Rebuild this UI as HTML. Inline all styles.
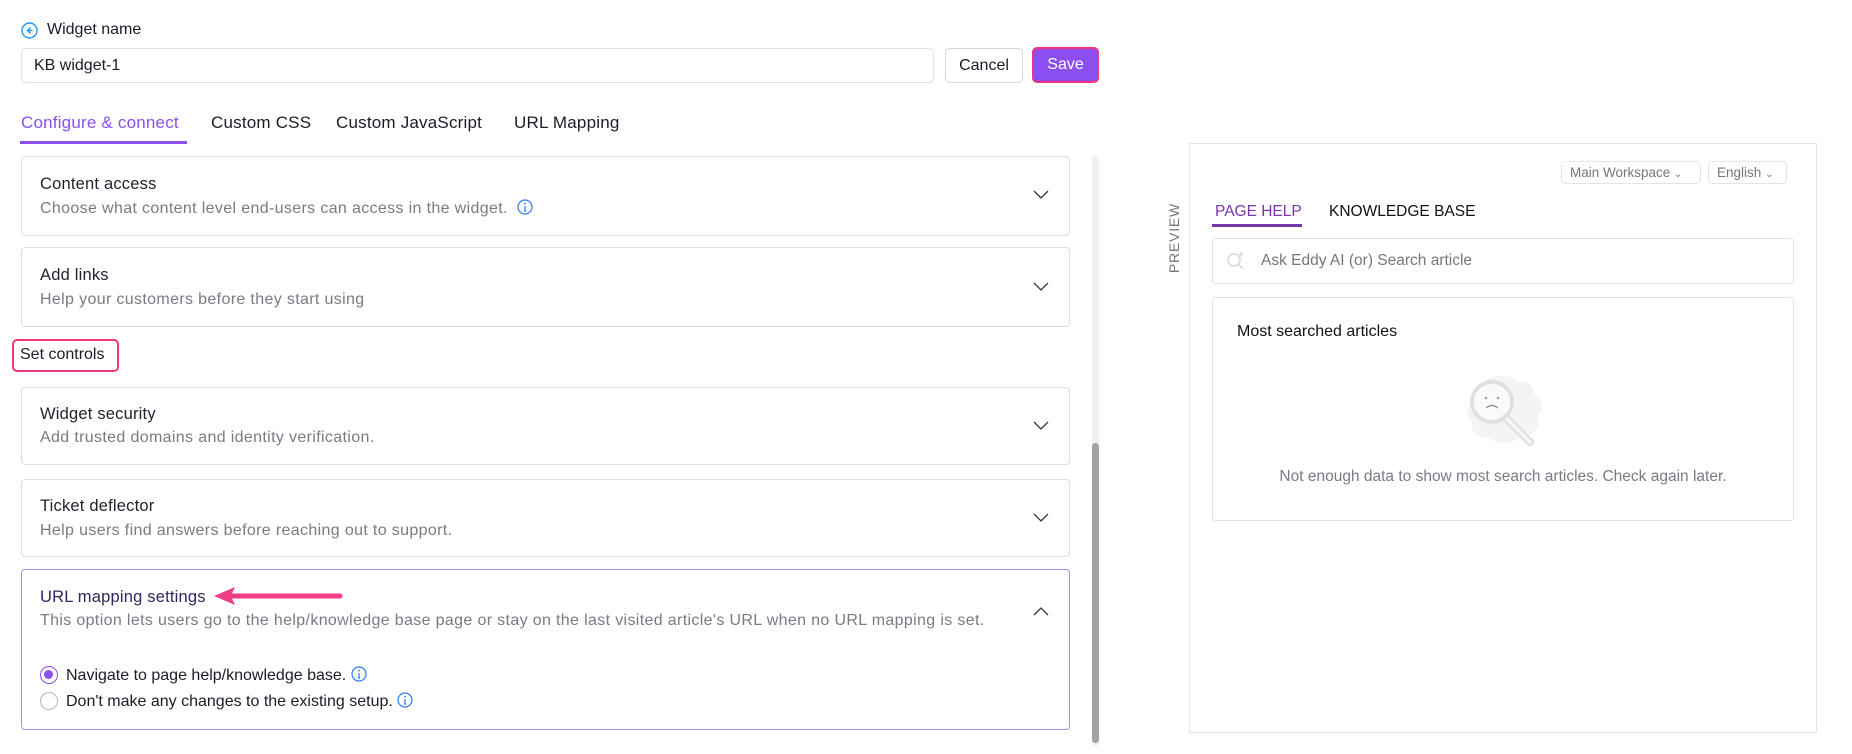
<!DOCTYPE html>
<html><head><meta charset="utf-8"><style>
*{box-sizing:border-box;margin:0;padding:0}
body{width:1852px;height:754px;background:#fff;font-family:"Liberation Sans",sans-serif;color:#1f1f2e;position:relative;overflow:hidden}
.a{position:absolute;white-space:nowrap}
.card{position:absolute;left:21px;width:1049px;border:1px solid #dcdce3;border-radius:4px;background:#fff}
.t{font-size:16.5px;color:#23232f;letter-spacing:.2px}
.d{font-size:16px;color:#7a7a85;letter-spacing:.35px}
.chev{position:absolute;right:20px;width:16px;height:10px}
.tab{font-size:17px;letter-spacing:.2px;color:#1c1c28}
</style></head><body>

<svg class="a" style="left:21px;top:22px" width="17" height="17" viewBox="0 0 17 17"><circle cx="8.5" cy="8.5" r="7.5" fill="none" stroke="#2196f3" stroke-width="1.4"/><path d="M9.5 5.5 L6.5 8.5 L9.5 11.5 M6.5 8.5 H11.5" fill="none" stroke="#2196f3" stroke-width="1.4"/></svg>
<div class="a" style="left:47px;top:21px;font-size:16px;color:#1c1c28">Widget name</div>

<div class="a" style="left:21px;top:48px;width:913px;height:35px;border:1px solid #e1e1e6;border-radius:5px;padding:8px 12px;font-size:16px;color:#1c1c28">KB widget-1</div>
<div class="a" style="left:945px;top:48px;width:78px;height:35px;border:1px solid #d4d4da;border-radius:5px;font-size:16px;text-align:center;line-height:33px;color:#1c1c28">Cancel</div>
<div class="a" style="left:1032px;top:47px;width:67px;height:36px;border:2.5px solid #f0357e;border-radius:5px;background:#8b4ff0;color:#fff;font-size:16px;text-align:center;line-height:31px">Save</div>

<div class="a tab" style="left:21px;top:113px;color:#8b4ff0">Configure &amp; connect</div>
<div class="a" style="left:20px;top:141px;width:167px;height:3px;background:#8b4ff0"></div>
<div class="a tab" style="left:211px;top:113px">Custom CSS</div>
<div class="a tab" style="left:336px;top:113px">Custom JavaScript</div>
<div class="a tab" style="left:514px;top:113px">URL Mapping</div>

<div class="card" style="top:156px;height:80px">
<div class="a t" style="left:18px;top:18px">Content access</div>
<div class="a d" style="left:18px;top:42px">Choose what content level end-users can access in the widget. <svg width="16" height="16" viewBox="0 0 16 16" style="vertical-align:-2px;margin-left:4px"><circle cx="8" cy="8" r="7" fill="none" stroke="#2f7bf0" stroke-width="1.2"/><path d="M8 7v5M7 12h2" stroke="#2f7bf0" stroke-width="1.2"/><circle cx="8" cy="4.6" r=".9" fill="#2f7bf0"/></svg></div>
<svg class="chev" style="top:33px" viewBox="0 0 16 10"><path d="M1 1l7 7 7-7" fill="none" stroke="#333" stroke-width="1.3"/></svg>
</div>

<div class="card" style="top:247px;height:80px">
<div class="a t" style="left:18px;top:18px">Add links</div>
<div class="a d" style="left:18px;top:43px">Help your customers before they start using</div>
<svg class="chev" style="top:34px" viewBox="0 0 16 10"><path d="M1 1l7 7 7-7" fill="none" stroke="#333" stroke-width="1.3"/></svg>
</div>

<div class="a" style="left:12px;top:339px;width:107px;height:33px;border:2.5px solid #ef3580;border-radius:5px;font-size:16px;padding-left:6px;line-height:28px;color:#1c1c28">Set controls</div>

<div class="card" style="top:387px;height:78px">
<div class="a t" style="left:18px;top:17px">Widget security</div>
<div class="a d" style="left:18px;top:41px">Add trusted domains and identity verification.</div>
<svg class="chev" style="top:33px" viewBox="0 0 16 10"><path d="M1 1l7 7 7-7" fill="none" stroke="#333" stroke-width="1.3"/></svg>
</div>

<div class="card" style="top:479px;height:78px">
<div class="a t" style="left:18px;top:17px">Ticket deflector</div>
<div class="a d" style="left:18px;top:42px">Help users find answers before reaching out to support.</div>
<svg class="chev" style="top:33px" viewBox="0 0 16 10"><path d="M1 1l7 7 7-7" fill="none" stroke="#333" stroke-width="1.3"/></svg>
</div>

<div class="card" style="top:569px;height:161px;border-color:#a88ff0">
<div class="a t" style="left:18px;top:18px;color:#2e2660">URL mapping settings</div>
<div class="a d" style="left:18px;top:42px">This option lets users go to the help/knowledge base page or stay on the last visited article's URL when no URL mapping is set.</div>
<svg class="chev" style="top:36px" viewBox="0 0 16 10"><path d="M1 9l7-7 7 7" fill="none" stroke="#333" stroke-width="1.3"/></svg>
<div class="a" style="left:18px;top:96px;width:18px;height:18px;border:1.5px solid #8b4ff0;border-radius:50%"><div style="margin:3px;width:9px;height:9px;border-radius:50%;background:#8b4ff0"></div></div>
<div class="a" style="left:44px;top:96px;font-size:16px;color:#1c1c28">Navigate to page help/knowledge base. <svg width="16" height="16" viewBox="0 0 16 16" style="vertical-align:-2px"><circle cx="8" cy="8" r="7" fill="none" stroke="#2f7bf0" stroke-width="1.2"/><path d="M8 7v5M7 12h2" stroke="#2f7bf0" stroke-width="1.2"/><circle cx="8" cy="4.6" r=".9" fill="#2f7bf0"/></svg></div>
<div class="a" style="left:18px;top:122px;width:18px;height:18px;border:1.2px solid #b5b5bd;border-radius:50%"></div>
<div class="a" style="left:44px;top:122px;font-size:16px;color:#1c1c28">Don't make any changes to the existing setup. <svg width="16" height="16" viewBox="0 0 16 16" style="vertical-align:-2px"><circle cx="8" cy="8" r="7" fill="none" stroke="#2f7bf0" stroke-width="1.2"/><path d="M8 7v5M7 12h2" stroke="#2f7bf0" stroke-width="1.2"/><circle cx="8" cy="4.6" r=".9" fill="#2f7bf0"/></svg></div>
</div>

<svg class="a" style="left:210px;top:584px" width="140" height="24" viewBox="0 0 140 24"><path d="M22 9.5 H130 a2.5 2.5 0 0 1 0 5 H22 L25 21 L4 12 L25 3 Z" fill="#ee3f86"/></svg>

<div class="a" style="left:1092px;top:156px;width:7px;height:590px;background:#f0f0f2;border-radius:4px"></div>
<div class="a" style="left:1092px;top:443px;width:7px;height:300px;background:#a2a2a8;border-radius:4px"></div>

<!-- preview -->
<div class="a" style="left:1189px;top:143px;width:628px;height:590px;border:1px solid #e6e6ea"></div>
<div class="a" style="left:1138px;top:230px;width:72px;transform:rotate(-90deg);font-size:14px;color:#77777f;letter-spacing:.8px;text-align:center">PREVIEW</div>

<div class="a" style="left:1561px;top:161px;width:140px;height:23px;border:1px solid #e4e4e8;border-radius:5px;font-size:13.5px;color:#777;padding-left:8px;line-height:21px">Main Workspace <span style="font-size:10px">&#8964;</span></div>
<div class="a" style="left:1708px;top:161px;width:79px;height:23px;border:1px solid #e4e4e8;border-radius:5px;font-size:13.5px;color:#777;padding-left:8px;line-height:21px">English <span style="font-size:10px">&#8964;</span></div>

<div class="a" style="left:1215px;top:203px;font-size:15.5px;color:#7a35a8">PAGE HELP</div>
<div class="a" style="left:1212px;top:224px;width:90px;height:3px;background:#7a35a8"></div>
<div class="a" style="left:1329px;top:203px;font-size:15.5px;color:#111">KNOWLEDGE BASE</div>

<div class="a" style="left:1212px;top:238px;width:582px;height:46px;border:1px solid #e2e2e6;border-radius:3px"></div>
<svg class="a" style="left:1226px;top:251px" width="20" height="20" viewBox="0 0 20 20"><circle cx="8" cy="9" r="6" fill="none" stroke="#dadade" stroke-width="1.6"/><path d="M12.5 13.5 L17 18" stroke="#dadade" stroke-width="1.6"/><path d="M15 1v5M12.5 3.5h5" stroke="#dadade" stroke-width="1.4"/></svg>
<div class="a" style="left:1261px;top:252px;font-size:15.5px;color:#777">Ask Eddy AI (or) Search article</div>

<div class="a" style="left:1212px;top:297px;width:582px;height:224px;border:1px solid #e2e2e6;border-radius:3px"></div>
<div class="a" style="left:1237px;top:323px;font-size:16px;color:#111">Most searched articles</div>
<svg class="a" style="left:1460px;top:372px" width="90" height="80" viewBox="0 0 90 80"><path d="M30 6c10-4 22-2 28 4 8-2 16 4 16 12 8 4 10 16 4 22 2 12-6 22-18 20-6 8-22 10-30 2-10 2-20-6-18-16-8-6-6-18 4-24 2-10 8-18 14-20z" fill="#f4f4f7"/><circle cx="32" cy="30" r="20" fill="#fafafa" stroke="#e0e0e4" stroke-width="4"/><path d="M46 46 L70 70" stroke="#e0e0e4" stroke-width="8" stroke-linecap="round"/><path d="M47 47 L70 70" stroke="#f7f7f9" stroke-width="3.5" stroke-linecap="round"/><circle cx="26" cy="26" r="1.2" fill="#999"/><circle cx="38" cy="26" r="1.2" fill="#999"/><path d="M26 36q6-5 12 0" fill="none" stroke="#888" stroke-width="1.1"/></svg>
<div class="a" style="left:1212px;top:468px;width:582px;text-align:center;font-size:15.5px;color:#7a7a85">Not enough data to show most search articles. Check again later.</div>

</body></html>
